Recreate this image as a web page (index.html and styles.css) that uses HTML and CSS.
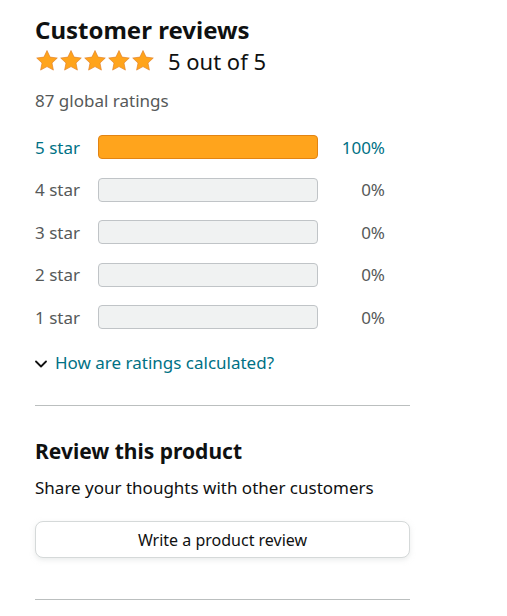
FILE: index.html
```html
<!DOCTYPE html>
<html>
<head>
<meta charset="utf-8">
<link rel="stylesheet" href="styles.css">
</head>
<body>
<div class="panel">
  <h2 class="title">Customer reviews</h2>
  <div class="summary">
    <span class="stars">
      <svg viewBox="0 0 24 24" class="star"><path d="M12 1.5l3.1 6.6 7.2.9-5.3 5 1.4 7.1L12 17.6l-6.4 3.5L7 14l-5.3-5 7.2-.9z"/></svg>
      <svg viewBox="0 0 24 24" class="star"><path d="M12 1.5l3.1 6.6 7.2.9-5.3 5 1.4 7.1L12 17.6l-6.4 3.5L7 14l-5.3-5 7.2-.9z"/></svg>
      <svg viewBox="0 0 24 24" class="star"><path d="M12 1.5l3.1 6.6 7.2.9-5.3 5 1.4 7.1L12 17.6l-6.4 3.5L7 14l-5.3-5 7.2-.9z"/></svg>
      <svg viewBox="0 0 24 24" class="star"><path d="M12 1.5l3.1 6.6 7.2.9-5.3 5 1.4 7.1L12 17.6l-6.4 3.5L7 14l-5.3-5 7.2-.9z"/></svg>
      <svg viewBox="0 0 24 24" class="star"><path d="M12 1.5l3.1 6.6 7.2.9-5.3 5 1.4 7.1L12 17.6l-6.4 3.5L7 14l-5.3-5 7.2-.9z"/></svg>
    </span>
    <span class="score">5 out of 5</span>
  </div>
  <div class="total">87 global ratings</div>
  <ul class="histogram">
    <li class="row active"><span class="label">5 star</span><span class="bar full"></span><span class="pct">100%</span></li>
    <li class="row"><span class="label">4 star</span><span class="bar"></span><span class="pct">0%</span></li>
    <li class="row"><span class="label">3 star</span><span class="bar"></span><span class="pct">0%</span></li>
    <li class="row"><span class="label">2 star</span><span class="bar"></span><span class="pct">0%</span></li>
    <li class="row"><span class="label">1 star</span><span class="bar"></span><span class="pct">0%</span></li>
  </ul>
  <div class="how">
    <svg class="chev" viewBox="0 0 12 8"><path d="M1 1.5l5 5 5-5" fill="none" stroke="#111" stroke-width="1.8" stroke-linecap="round" stroke-linejoin="round"/></svg>
    <span class="link">How are ratings calculated?</span>
  </div>
  <hr class="divider">
  <h3 class="subtitle">Review this product</h3>
  <p class="share">Share your thoughts with other customers</p>
  <button class="write">Write a product review</button>
  <hr class="divider last">
</div>
</body>
</html>
```
FILE: styles.css
```css
* { box-sizing: border-box; }
body {
  margin: 0;
  background: #fff;
  font-family: "Noto Sans", "Open Sans", sans-serif;
  color: #0f1111;
}
.panel {
  width: 375px;
  margin-left: 35px;
  padding-top: 14px;
}
.title {
  margin: 0;
  font-size: 24px;
  font-weight: 700;
  line-height: 32px;
}
.summary {
  display: flex;
  align-items: center;
  gap: 13px;
  height: 30px;
}
.stars { display: flex; }
.star {
  width: 24px;
  height: 24px;
  fill: #ffa41c;
  stroke: #de7921;
  stroke-width: 0.6;
}
.score {
  font-size: 22px;
  line-height: 30px;
}
.total {
  margin-top: 15px;
  font-size: 17px;
  line-height: 20px;
  color: #565959;
}
.histogram {
  list-style: none;
  margin: 24px 0 0;
  padding: 0;
  width: 350px;
}
.row {
  display: flex;
  align-items: center;
  height: 24px;
  margin-bottom: 18.5px;
  font-size: 17px;
  color: #565959;
}
.row:last-child { margin-bottom: 0; }
.row.active { color: #007185; }
.label { width: 63px; }
.bar {
  width: 220px;
  height: 24px;
  background: #f0f2f2;
  border: 1px solid #c0c4c7;
  border-radius: 4px;
}
.bar.full {
  background: #ffa41c;
  border-color: #e28413;
}
.pct {
  flex: 1;
  text-align: right;
}
.how {
  display: flex;
  align-items: center;
  gap: 8px;
  margin-top: 21px;
  height: 24px;
  font-size: 17px;
}
.chev { width: 12px; height: 8px; margin-top: 3px; }
.link { color: #007185; }
.divider {
  border: 0;
  border-top: 1px solid #bbbfbf;
  margin: 31px 0 0;
}
.subtitle {
  margin: 31px 0 0;
  font-size: 21px;
  font-weight: 700;
  line-height: 28px;
}
.share {
  margin: 11px 0 0;
  font-size: 17px;
  line-height: 24px;
}
.write {
  display: block;
  width: 100%;
  height: 37px;
  margin-top: 21px;
  background: #fff;
  border: 1px solid #d5d9d9;
  border-radius: 8px;
  box-shadow: 0 2px 5px rgba(213,217,217,.5);
  font-family: inherit;
  font-size: 16px;
  color: #0f1111;
}
.divider.last { margin-top: 41px; }
```
